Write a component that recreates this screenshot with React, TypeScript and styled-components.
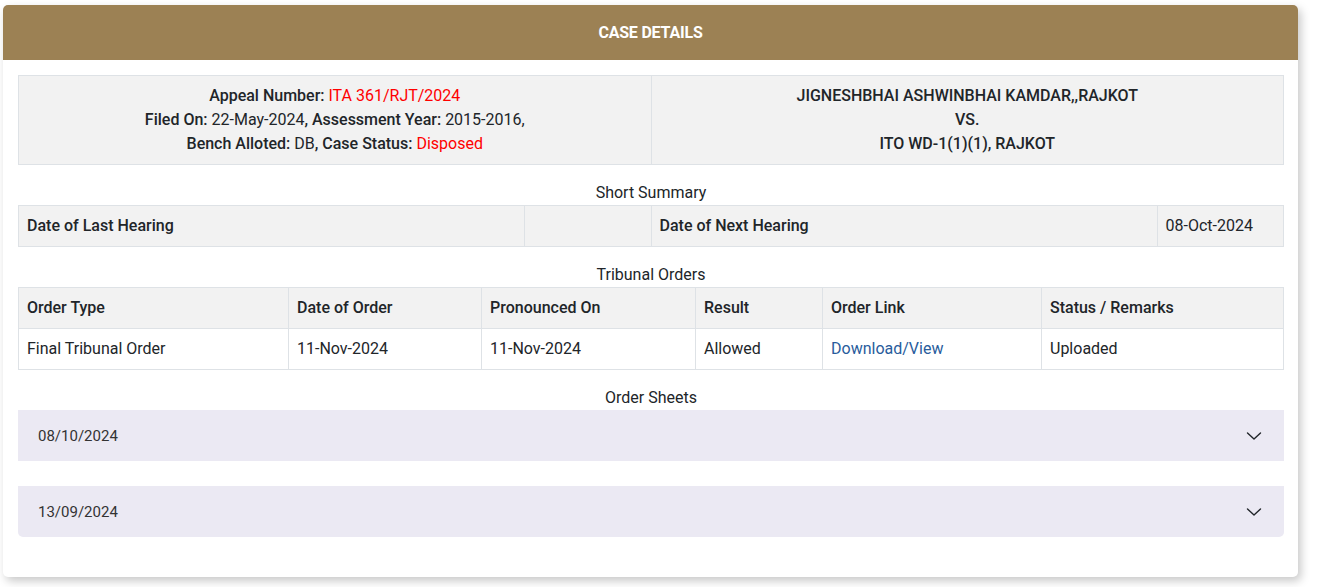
import React from "react";
import styled, { createGlobalStyle } from "styled-components";

const GlobalStyle = createGlobalStyle`
  * { box-sizing: border-box; }
  body {
    margin: 0;
    background: #ffffff;
    font-family: Roboto, "Liberation Sans", Arial, sans-serif;
    color: #212529;
    font-size: 16px;
  }
`;

const Page = styled.div`
  padding: 5px 19px 10px 3px;
`;

const Card = styled.section`
  background: #ffffff;
  border-radius: 5px;
  box-shadow: 3px 4px 10px rgba(0, 0, 0, 0.22);
`;

const CardHeader = styled.header`
  height: 55px;
  background: #9c8154;
  border-radius: 5px 5px 0 0;
  display: flex;
  align-items: center;
  justify-content: center;
  color: #ffffff;
  font-weight: 700;
  font-size: 16px;
  letter-spacing: -0.2px;
  text-transform: uppercase;
`;

const CardBody = styled.div`
  padding: 15px 14px 40px 15px;
`;

const Table = styled.table`
  width: 100%;
  border-collapse: collapse;
  table-layout: fixed;
`;

const Cell = styled.td<{ $head?: boolean; $shade?: boolean; $w?: string; $center?: boolean }>`
  border: 1px solid #dee2e6;
  padding: 8px 8px;
  line-height: 24px;
  font-size: 16px;
  font-weight: ${(p) => (p.$head ? 500 : 400)};
  background: ${(p) => (p.$shade ? "#f2f2f2" : "#ffffff")};
  text-align: ${(p) => (p.$center ? "center" : "left")};
  width: ${(p) => p.$w ?? "auto"};
  vertical-align: middle;
  color: #212529;
`;

const Label = styled.span`
  font-weight: 500;
`;

const Red = styled.span`
  color: #ff0000;
`;

const Party = styled.div`
  font-weight: 500;
`;

const SectionTitle = styled.div`
  text-align: center;
  line-height: 24px;
  font-size: 16px;
  margin-top: 16px;
  color: #212529;
`;

const Link = styled.a`
  color: #285c9c;
  text-decoration: none;
`;

const Sheets = styled.div`
  display: flex;
  flex-direction: column;
  gap: 25px;
`;

const SheetButton = styled.button<{ $last?: boolean }>`
  all: unset;
  box-sizing: border-box;
  width: 100%;
  height: 51px;
  padding: 0 22px 0 20px;
  display: flex;
  align-items: center;
  justify-content: space-between;
  background: #ebe9f3;
  border-radius: ${(p) => (p.$last ? "0 0 5px 5px" : "0")};
  font-family: Roboto, "Liberation Sans", Arial, sans-serif;
  font-size: 15px;
  color: #333333;
  cursor: pointer;
`;

const Chevron = () => (
  <svg width="16" height="16" viewBox="0 0 16 16" fill="none">
    <path d="M1.5 5L8 11L14.5 5" stroke="#212529" strokeWidth="1.4" strokeLinecap="round" strokeLinejoin="round" />
  </svg>
);

const orders = [
  { type: "Final Tribunal Order", date: "11-Nov-2024", pron: "11-Nov-2024", result: "Allowed", status: "Uploaded" },
];

const orderCols = [
  { t: "Order Type", w: "270px" },
  { t: "Date of Order", w: "193px" },
  { t: "Pronounced On", w: "214px" },
  { t: "Result", w: "127px" },
  { t: "Order Link", w: "219px" },
  { t: "Status / Remarks", w: "auto" },
];

const sheets = ["08/10/2024", "13/09/2024"];

export default function App() {
  return (
    <>
      <GlobalStyle />
      <Page>
        <Card>
          <CardHeader>Case Details</CardHeader>
          <CardBody>
            <Table>
              <tbody>
                <tr>
                  <Cell $shade $center $w="50%">
                    <div>
                      <Label>Appeal Number:</Label> <Red>ITA 361/RJT/2024</Red>
                    </div>
                    <div>
                      <Label>Filed On:</Label> 22-May-2024<Label>,</Label> <Label>Assessment Year:</Label> 2015-2016,
                    </div>
                    <div>
                      <Label>Bench Alloted:</Label> DB<Label>,</Label> <Label>Case Status:</Label> <Red>Disposed</Red>
                    </div>
                  </Cell>
                  <Cell $shade $center $w="50%">
                    <Party>JIGNESHBHAI ASHWINBHAI KAMDAR,,RAJKOT</Party>
                    <Party>VS.</Party>
                    <Party>ITO WD-1(1)(1), RAJKOT</Party>
                  </Cell>
                </tr>
              </tbody>
            </Table>

            <SectionTitle>Short Summary</SectionTitle>
            <Table>
              <tbody>
                <tr>
                  <Cell $shade $head $w="40%">Date of Last Hearing</Cell>
                  <Cell $shade $w="10%"></Cell>
                  <Cell $shade $head $w="40%">Date of Next Hearing</Cell>
                  <Cell $shade $w="10%">08-Oct-2024</Cell>
                </tr>
              </tbody>
            </Table>

            <SectionTitle>Tribunal Orders</SectionTitle>
            <Table>
              <thead>
                <tr>
                  {orderCols.map((c) => (
                    <Cell as="th" key={c.t} $shade $head $w={c.w}>
                      {c.t}
                    </Cell>
                  ))}
                </tr>
              </thead>
              <tbody>
                {orders.map((o) => (
                  <tr key={o.type}>
                    <Cell>{o.type}</Cell>
                    <Cell>{o.date}</Cell>
                    <Cell>{o.pron}</Cell>
                    <Cell>{o.result}</Cell>
                    <Cell>
                      <Link href="#">Download/View</Link>
                    </Cell>
                    <Cell>{o.status}</Cell>
                  </tr>
                ))}
              </tbody>
            </Table>

            <SectionTitle>Order Sheets</SectionTitle>
            <Sheets>
              {sheets.map((s, i) => (
                <SheetButton key={s} $last={i === sheets.length - 1}>
                  <span>{s}</span>
                  <Chevron />
                </SheetButton>
              ))}
            </Sheets>
          </CardBody>
        </Card>
      </Page>
    </>
  );
}
